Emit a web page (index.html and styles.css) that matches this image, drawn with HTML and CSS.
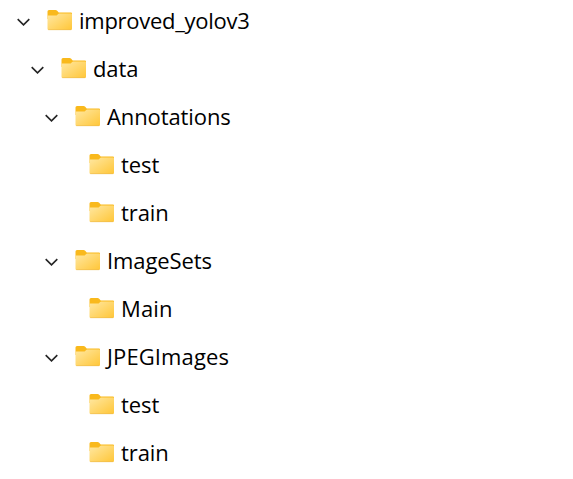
FILE: index.html
```html
<!DOCTYPE html>
<html lang="en">
<head>
<meta charset="utf-8">
<title>Folders</title>
<link rel="stylesheet" href="styles.css">
</head>
<body>
<svg class="defs" width="0" height="0">
<defs>
<linearGradient id="g" x1="0" y1="0" x2="1" y2="1"><stop offset="0" stop-color="#ffe8a3"/><stop offset="1" stop-color="#ffc637"/></linearGradient>
<symbol id="folder" viewBox="0 0 26 22"><path d="M.5 2.500Q.5 1 2 1H8.500Q9.500 1 10.200 1.800L11.700 3.500H24Q25 3.500 25 4.500V10H.5Z" fill="#f9b91c"/><path d="M.5 6.500H8.800Q9.600 6.500 10.200 5.900L11.100 5Q11.600 4.500 12.300 4.500H24Q25 4.500 25 5.500V19.800Q25 21 23.800 21H1.700Q.5 21 .5 19.800Z" fill="url(#g)"/><path d="M1.200 20.700H24.300" stroke="#edb84e" stroke-width=".6"/></symbol>
<symbol id="chevron" viewBox="0 0 14 8"><path d="M.7 1.100L6.500 6.900L12.300 1.100" fill="none" stroke="#252525" stroke-width="1.600"/></symbol>
</defs>
</svg>
<ul class="tree">
<li class="row l0"><svg class="chev"><use href="#chevron"/></svg><svg class="folder"><use href="#folder"/></svg><span class="tight">improved_yolov3</span></li>
<li class="row l1"><svg class="chev"><use href="#chevron"/></svg><svg class="folder"><use href="#folder"/></svg><span>data</span></li>
<li class="row l2"><svg class="chev"><use href="#chevron"/></svg><svg class="folder"><use href="#folder"/></svg><span>Annotations</span></li>
<li class="row l3"><svg class="folder"><use href="#folder"/></svg><span>test</span></li>
<li class="row l3"><svg class="folder"><use href="#folder"/></svg><span>train</span></li>
<li class="row l2"><svg class="chev"><use href="#chevron"/></svg><svg class="folder"><use href="#folder"/></svg><span>ImageSets</span></li>
<li class="row l3"><svg class="folder"><use href="#folder"/></svg><span class="wide">Main</span></li>
<li class="row l2"><svg class="chev"><use href="#chevron"/></svg><svg class="folder"><use href="#folder"/></svg><span class="wide">JPEGImages</span></li>
<li class="row l3"><svg class="folder"><use href="#folder"/></svg><span>test</span></li>
<li class="row l3"><svg class="folder"><use href="#folder"/></svg><span>train</span></li>
</ul>
</body>
</html>
```
FILE: styles.css
```css
body { margin: 0; background: #fff; overflow: hidden; }
.defs { display: block; }
.tree { list-style: none; margin: -4px 0 0; padding: 0; font: 22px/48px "Open Sans", "Noto Sans", sans-serif; letter-spacing: -0.1px; color: #000; }
.row { display: flex; align-items: center; height: 48px; }
.l0 { padding-left: 17px; }
.l1 { padding-left: 31px; }
.l2 { padding-left: 45px; }
.l3 { padding-left: 89px; }
.chev { width: 14px; height: 8px; margin: 3px 16px 0 0; }
.folder { width: 26px; height: 22px; margin-right: 6px; }
.tight { letter-spacing: -0.27px; }
.wide { letter-spacing: 0.12px; }
```
